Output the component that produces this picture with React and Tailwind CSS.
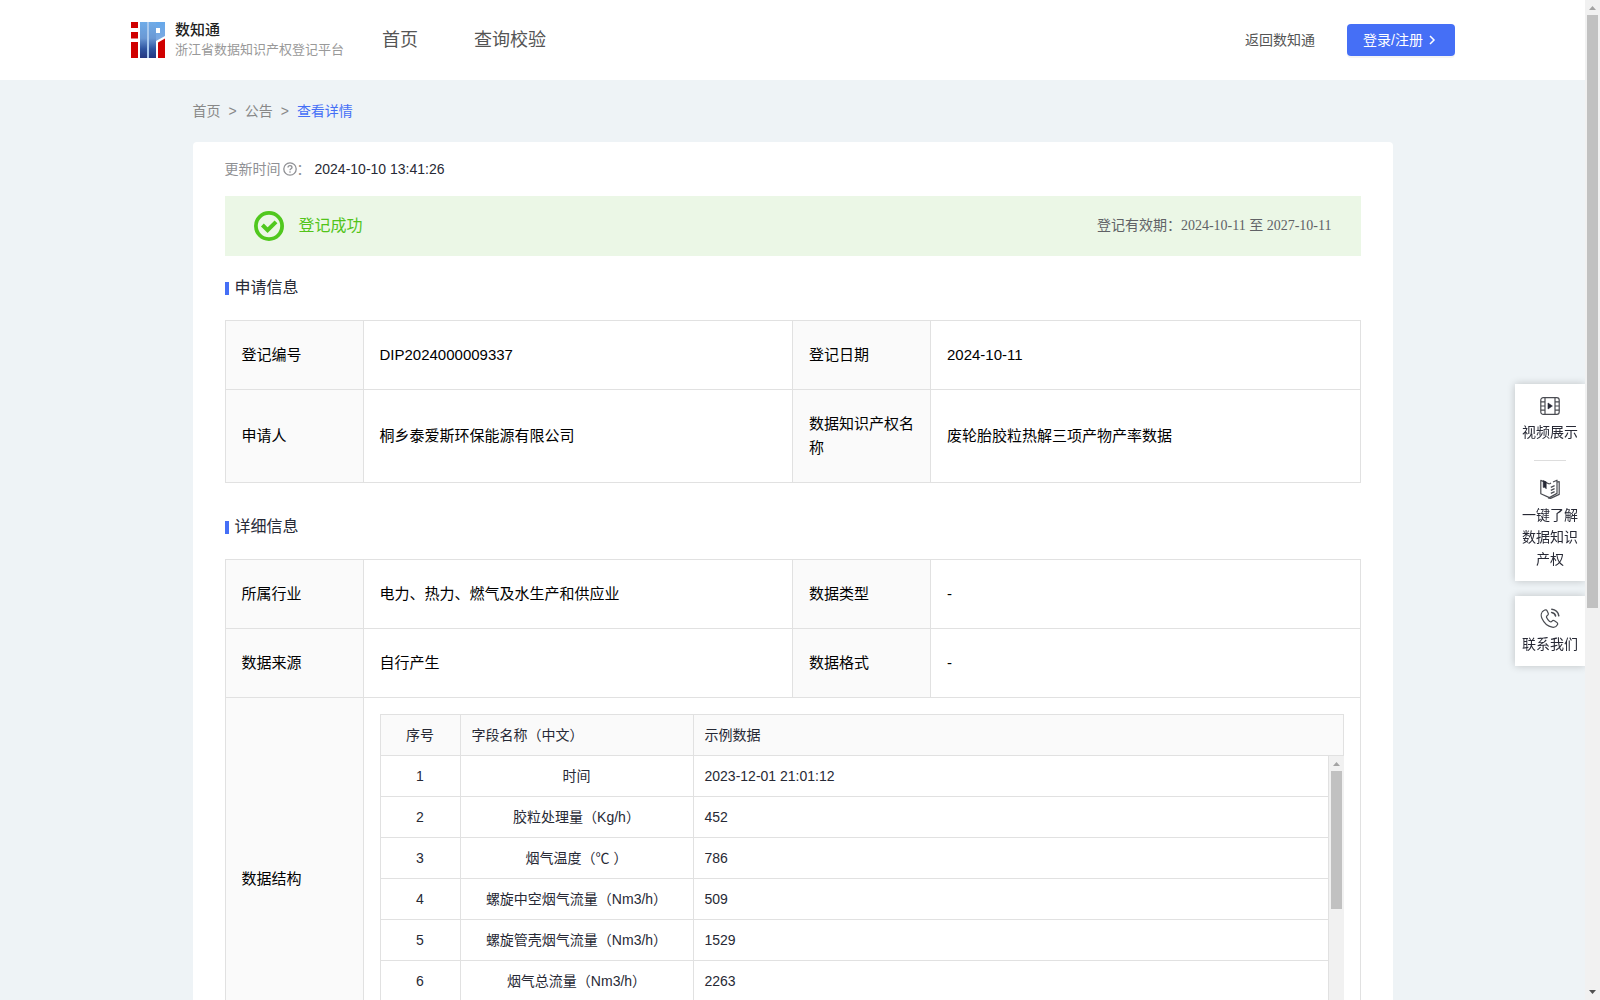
import { useState } from "react";

const menus = ["首页", "查询校验"];

const fields = [
  { name: "时间", sample: "2023-12-01 21:01:12" },
  { name: "胶粒处理量（Kg/h）", sample: "452" },
  { name: "烟气温度（℃ ）", sample: "786" },
  { name: "螺旋中空烟气流量（Nm3/h）", sample: "509" },
  { name: "螺旋管壳烟气流量（Nm3/h）", sample: "1529" },
  { name: "烟气总流量（Nm3/h）", sample: "2263" },
];

const Logo = () => (
  <svg width="34" height="36" viewBox="0 0 34 36" aria-hidden="true">
    <defs>
      <linearGradient id="logoBlue" x1="0" y1="0" x2="0" y2="1">
        <stop offset="0" stopColor="#70ace8" />
        <stop offset="0.45" stopColor="#6a98d4" />
        <stop offset="0.75" stopColor="#2f54a0" />
        <stop offset="1" stopColor="#243680" />
      </linearGradient>
      <linearGradient id="logoSky" x1="0" y1="0" x2="0" y2="1">
        <stop offset="0" stopColor="#66a8ea" />
        <stop offset="1" stopColor="#7fa9e0" />
      </linearGradient>
    </defs>
    <rect x="0" y="0" width="7" height="6" fill="#d00000" />
    <rect x="0" y="10" width="7" height="6.5" fill="#d00000" />
    <rect x="0" y="20" width="7" height="16" fill="#d00000" />
    <rect x="9" y="0" width="7" height="36" fill="url(#logoBlue)" />
    <rect x="16" y="0" width="2" height="36" fill="#a9c9ee" />
    <rect x="18" y="0" width="7" height="36" fill="url(#logoBlue)" />
    <path d="M25 0H34V14L25 19V11H29V6H25Z" fill="url(#logoSky)" />
    <path d="M27 20.5L34 16.5V36H27Z" fill="#d00000" />
  </svg>
);

const QuestionIcon = () => (
  <svg width="14" height="14" viewBox="0 0 14 14" fill="none" stroke="#8f9094" aria-hidden="true">
    <circle cx="7" cy="7" r="6.2" strokeWidth="1.3" />
    <path d="M5 5.6C5 4.4 5.9 3.7 7 3.7S9 4.5 9 5.5C9 6.8 7 6.8 7 8.3" strokeWidth="1.3" />
    <circle cx="7" cy="10" r="0.8" fill="#8f9094" stroke="none" />
  </svg>
);

const SuccessIcon = () => (
  <svg width="30" height="30" viewBox="0 0 30 30" fill="none" stroke="#50c81e" aria-hidden="true">
    <circle cx="15" cy="15" r="13.1" strokeWidth="3.8" />
    <path d="M8.4 14L13.6 19.2L22 10.8" strokeWidth="4" />
  </svg>
);

const VideoIcon = () => (
  <svg width="20" height="20" viewBox="0 0 20 20" fill="none" stroke="#4a4c52" strokeWidth="1.2" aria-hidden="true">
    <rect x="0.8" y="1.6" width="18.4" height="16.8" rx="2.4" />
    <path d="M5 1.6V18.4M15 1.6V18.4M0.8 5.8H5M0.8 10H5M0.8 14.2H5M15 5.8H19.2M15 10H19.2M15 14.2H19.2" />
    <path d="M8 7L12.4 10L8 13Z" fill="#272935" stroke="#272935" strokeWidth="0.6" />
  </svg>
);

const BookIcon = () => (
  <svg width="20" height="20" viewBox="0 0 20 20" fill="none" stroke="#4a4c52" strokeWidth="1.2" strokeLinejoin="round" aria-hidden="true">
    <path d="M9.4 5L0.8 1.4V14.8L9.4 18.6L17 14.4V1.2L13 3" />
    <path d="M9.4 5L11 4" />
    <path d="M17 3L19.2 2.6V15.4L10.6 19.4L8 18.8" />
    <path d="M3.2 1.6L6.2 2.8V9.8L4.7 8.2L3.2 8.4Z" fill="#272935" stroke="#272935" strokeWidth="0.6" />
    <path d="M10.8 8.4L14.6 6.6M10.8 11.4L14.6 9.6M10.8 14.4L14.6 12.6" />
  </svg>
);

const PhoneIcon = () => (
  <svg width="20" height="20" viewBox="0 0 20 20" fill="none" stroke="#4a4c52" strokeWidth="1.2" strokeLinecap="round" strokeLinejoin="round" aria-hidden="true">
    <path d="M4.2 2.2C1.4 3.6 0.4 7 2 10.6C4 15 8.2 18.6 12.2 19.2C14.6 19.6 16.6 18.4 17.4 16.8C18 15.6 17.6 14.8 16.6 14.2L14.4 12.8C13.4 12.2 12.6 12.4 12 13.2C11.2 14.2 10.6 14.2 9.6 13.4C8.2 12.4 7.2 11 6.6 9.6C6.2 8.6 6.4 8 7.4 7.4C8.4 6.8 8.6 6.2 8.2 5.2L7.2 3C6.6 1.8 5.6 1.4 4.2 2.2Z" />
    <path d="M11.6 4.4C13.6 4.6 15.2 6 15.6 8M11.8 1.2C15.4 1.4 18.4 4.2 18.8 7.8" strokeWidth="1.5" />
  </svg>
);

const SectionTitle = ({ children }) => (
  <h2 className="flex items-center gap-[6px] text-base leading-6 text-[#272a37]">
    <span className="h-[13px] w-1 bg-[#456ff6]" />
    {children}
  </h2>
);

const Label = ({ children }) => (
  <th scope="row" className="w-[138px] border border-[#e1e1e1] bg-[#fafafa] px-4 py-[22px] text-left font-normal">
    {children}
  </th>
);

const Value = ({ children }) => (
  <td className="border border-[#e1e1e1] px-4 py-[22px]">{children}</td>
);

const ScrollTrack = ({ thumb, end }) => (
  <div className="flex w-[15px] shrink-0 flex-col items-center bg-[#f1f1f1]" aria-hidden="true">
    <svg width="15" height="15" viewBox="0 0 15 15" className="shrink-0">
      <path d="M4 10L7.5 6L11 10Z" fill="#a3a3a3" />
    </svg>
    <div className={`w-[11px] bg-[#c1c1c1] ${thumb}`} />
    {end && (
      <svg width="15" height="15" viewBox="0 0 15 15" className="mt-auto shrink-0">
        <path d="M4 5L7.5 9L11 5Z" fill="#505050" />
      </svg>
    )}
  </div>
);

const FieldTable = () => (
  <div className="text-sm leading-5 text-[#272935]">
    <table className="w-full table-fixed border-separate border-spacing-0 border-t border-l border-[#e1e1e1]">
      <thead>
        <tr className="h-[41px] bg-[#fafafa]">
          <th className="w-20 border-r border-b border-[#e1e1e1] font-normal">序号</th>
          <th className="w-[233px] border-r border-b border-[#e1e1e1] px-[11px] text-left font-normal">字段名称（中文）</th>
          <th className="border-r border-b border-[#e1e1e1] px-[11px] text-left font-normal">示例数据</th>
        </tr>
      </thead>
    </table>
    <div className="flex h-[287px] overflow-hidden">
      <table className="min-w-0 flex-1 table-fixed border-separate border-spacing-0 self-start border-l border-[#e1e1e1]">
        <tbody>
          {fields.map((field, index) => (
            <tr key={field.name} className="h-[41px]">
              <td className="w-20 border-r border-b border-[#e1e1e1] text-center">{index + 1}</td>
              <td className="w-[233px] border-r border-b border-[#e1e1e1] px-[11px] text-center">{field.name}</td>
              <td className="border-r border-b border-[#e1e1e1] px-[11px]">{field.sample}</td>
            </tr>
          ))}
        </tbody>
      </table>
      <ScrollTrack thumb="h-[138px]" />
    </div>
  </div>
);

const SideLink = ({ icon, children }) => (
  <a href="#" className="flex flex-col items-center gap-[5px] px-[7px] pt-3 text-center text-sm leading-[22px]">
    {icon}
    <span>{children}</span>
  </a>
);

const App = () => {
  const [active, setActive] = useState("");

  return (
    <div className="flex h-screen overflow-hidden bg-[#eef3f6] font-['Liberation_Sans','Noto_Sans_CJK_SC',sans-serif] text-[#272935]">
      <div className="min-w-0 flex-1 overflow-hidden">
        <header className="flex h-20 items-center bg-white pr-[130px] pl-[131px]">
          <a href="#" className="flex items-center gap-[10px]">
            <Logo />
            <span className="flex flex-col">
              <span className="text-[15px] leading-5 font-medium text-[#1f1f1f]">数知通</span>
              <span className="text-[13px] leading-5 text-[#999999]">浙江省数据知识产权登记平台</span>
            </span>
          </a>
          <nav className="ml-[38px] flex gap-14 text-lg text-[#555555]">
            {menus.map((menu) => (
              <a
                key={menu}
                href="#"
                onClick={() => setActive(menu)}
                aria-current={active === menu ? "page" : undefined}
              >
                {menu}
              </a>
            ))}
          </nav>
          <a href="#" className="ml-auto text-sm text-[#555555]">返回数知通</a>
          <button className="ml-8 flex h-8 items-center gap-1 rounded-sm bg-[#456ff6] px-4 text-sm text-white shadow-[0_2px_0_rgba(0,0,0,0.045)]">
            登录/注册
            <svg width="12" height="12" viewBox="0 0 12 12" fill="none" stroke="currentColor" strokeWidth="1.5" aria-hidden="true">
              <path d="M3 2L7 6L3 10" />
            </svg>
          </button>
        </header>

        <div className="mx-auto max-w-[1200px]">
          <nav className="flex h-[62px] items-center gap-2 text-sm text-[#888888]">
            <a href="#">首页</a>
            <span>&gt;</span>
            <a href="#">公告</a>
            <span>&gt;</span>
            <a href="#" className="text-[#456ff6]">查看详情</a>
          </nav>

          <main className="rounded bg-white px-8 pt-4 pb-8">
            <div className="flex items-center text-sm leading-[22px] text-[#8f9094]">
              <span>更新时间</span>
              <span className="ml-[2px]"><QuestionIcon /></span>
              <span>：</span>
              <span className="ml-1 text-[#272935]">2024-10-10 13:41:26</span>
            </div>

            <div className="mt-4 flex h-15 items-center bg-[#ebf7e6] px-[29px]">
              <SuccessIcon />
              <span className="ml-[15px] text-base text-[#52c41a]">登记成功</span>
              <span className="ml-auto font-['Liberation_Serif','Noto_Sans_CJK_SC',serif] text-sm text-[#606266]">
                登记有效期：2024-10-11 至 2027-10-11
              </span>
            </div>

            <div className="mt-5">
              <SectionTitle>申请信息</SectionTitle>
            </div>
            <table className="mt-5 w-full table-fixed border-collapse text-[15px] leading-6 text-black">
              <tbody>
                <tr>
                  <Label>登记编号</Label>
                  <Value>DIP2024000009337</Value>
                  <Label>登记日期</Label>
                  <Value>2024-10-11</Value>
                </tr>
                <tr>
                  <Label>申请人</Label>
                  <Value>桐乡泰爱斯环保能源有限公司</Value>
                  <Label>数据知识产权名称</Label>
                  <Value>废轮胎胶粒热解三项产物产率数据</Value>
                </tr>
              </tbody>
            </table>

            <div className="mt-8">
              <SectionTitle>详细信息</SectionTitle>
            </div>
            <table className="mt-5 w-full table-fixed border-collapse text-[15px] leading-6 text-black">
              <tbody>
                <tr>
                  <Label>所属行业</Label>
                  <Value>电力、热力、燃气及水生产和供应业</Value>
                  <Label>数据类型</Label>
                  <Value>-</Value>
                </tr>
                <tr>
                  <Label>数据来源</Label>
                  <Value>自行产生</Value>
                  <Label>数据格式</Label>
                  <Value>-</Value>
                </tr>
                <tr>
                  <Label>数据结构</Label>
                  <td colSpan={3} className="border border-[#e1e1e1] p-4">
                    <FieldTable />
                  </td>
                </tr>
              </tbody>
            </table>
          </main>
        </div>
      </div>

      <aside className="fixed top-96 right-[15px] flex w-[70px] flex-col gap-[15px]">
        <div className="bg-white pb-[11px] shadow-[0_0_8px_rgba(0,0,0,0.2)]">
          <SideLink icon={<VideoIcon />}>视频展示</SideLink>
          <div className="mx-auto mt-[17px] mb-[6px] h-px w-8 bg-[#dddddd]" />
          <SideLink icon={<BookIcon />}>一键了解数据知识产权</SideLink>
        </div>
        <div className="bg-white pb-[11px] shadow-[0_0_8px_rgba(0,0,0,0.2)]">
          <SideLink icon={<PhoneIcon />}>联系我们</SideLink>
        </div>
      </aside>

      <div className="relative z-10 flex">
        <ScrollTrack thumb="h-[593px]" end />
      </div>
    </div>
  );
};

export default App;
